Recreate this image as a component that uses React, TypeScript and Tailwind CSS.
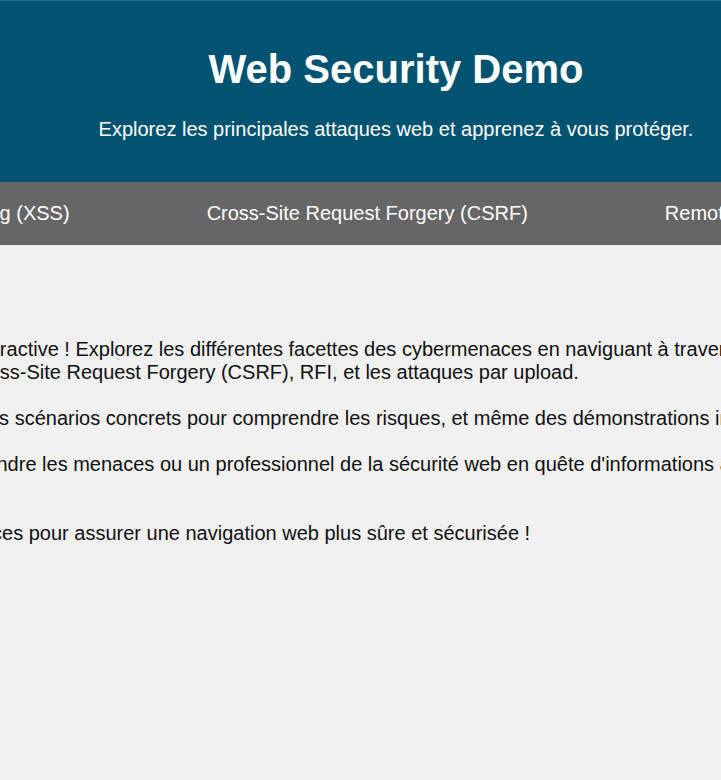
import React from "react";

const navItems = [
  "Cross-Site Scripting (XSS)",
  "Cross-Site Request Forgery (CSRF)",
  "Remote File Inclusion (RFI)",
  "Upload de fichiers",
];

const lines: Array<string | null> = [
  "Bienvenue sur notre plateforme interactive ! Explorez les différentes facettes des cybermenaces en naviguant à travers nos sections consacrées aux failles",
  "des Cross-Site Scripting (XSS), Cross-Site Request Forgery (CSRF), RFI, et les attaques par upload.",
  null,
  "Trouvez des explications claires, des scénarios concrets pour comprendre les risques, et même des démonstrations interactives.",
  null,
  "Que vous soyez curieux de comprendre les menaces ou un professionnel de la sécurité web en quête d'informations approfondies,",
  "vous êtes au bon endroit.",
  null,
  "Retrouvez tous les conseils et astuces pour assurer une navigation web plus sûre et sécurisée !",
];

const App = () => {
  return (
    <div className="min-h-screen w-full overflow-hidden bg-[#f0f0f0] font-['Liberation_Sans',Arial,sans-serif]">
      <div className="ml-[-357px] w-[1506px]">
        <header className="border-t border-[#2a6a86] bg-[#025371] pt-5 pb-[41px] text-center text-white">
          <h1 className="mt-[25px] mb-[26px] text-[40px] font-bold leading-[46px]">
            Web Security Demo
          </h1>
          <p className="text-[20px] leading-[23px]">
            Explorez les principales attaques web et apprenez à vous protéger.
          </p>
        </header>

        <nav className="flex gap-[137px] bg-[#666666] py-5 pl-[191px] text-[20px] leading-[23px] text-white">
          {navItems.map((item) => (
            <a key={item} href="#" className="whitespace-nowrap">
              {item}
            </a>
          ))}
        </nav>

        <main className="px-10 pt-5 text-[#111111]">
          <h2 className="mb-[41px] text-[24px] font-bold leading-[32px]">Accueil</h2>
          <div className="whitespace-nowrap text-[20px] leading-[23px]">
            {lines.map((line, i) =>
              line ? <div key={i}>{line}</div> : <div key={i} className="h-[23px]" />,
            )}
          </div>
        </main>
      </div>
    </div>
  );
};

export default App;
